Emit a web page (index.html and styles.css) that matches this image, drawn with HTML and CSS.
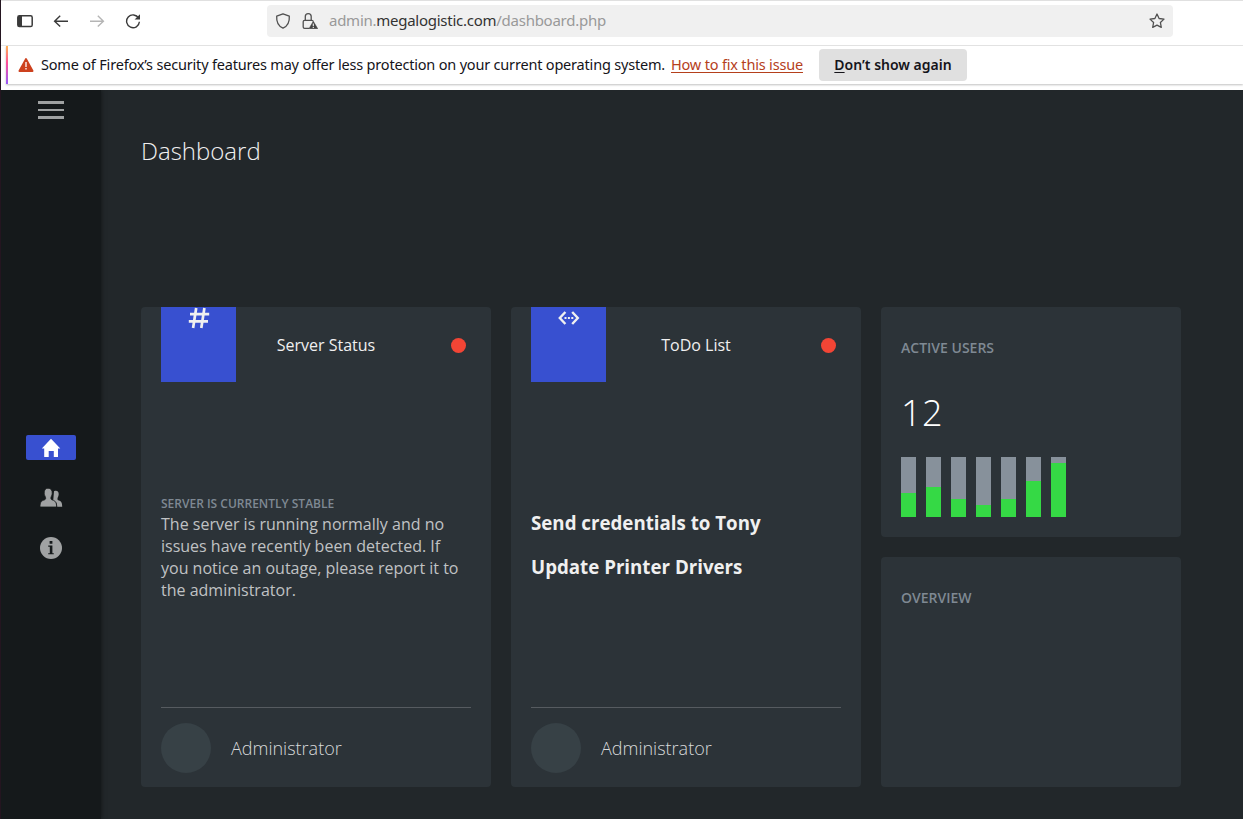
FILE: index.html
```
<!DOCTYPE html>
<html lang="en">
<head>
    <meta charset="UTF-8">
    <meta name="viewport" content="width=device-width, initial-scale=1.0">
    <title>Dashboard</title>
    <link rel="stylesheet" href="styles.css">
</head>
<body>
<div class="toolbar">
    <svg class="tool-icon" viewBox="0 0 16 16"><rect x="0.8" y="2.8" width="14.4" height="10.8" rx="1.6" fill="none" stroke="#3a3a3a" stroke-width="1.5"/><path d="M1 3h4v10H1z" fill="#3a3a3a"/></svg>
    <svg class="tool-icon" viewBox="0 0 16 16"><path d="M15 8.2H1.8M7.2 2.8L1.6 8.2l5.6 5.4" fill="none" stroke="#3a3a3a" stroke-width="1.4"/></svg>
    <svg class="tool-icon" viewBox="0 0 16 16"><path d="M1 8.2h13.2M8.8 2.8l5.6 5.4-5.6 5.4" fill="none" stroke="#b5b5b5" stroke-width="1.4"/></svg>
    <svg class="tool-icon" viewBox="0 0 16 16"><path d="M13.6 5.2A6.4 6.4 0 1 0 14.4 8.8" fill="none" stroke="#3a3a3a" stroke-width="1.4"/><path d="M15 1.2v5.3H9.6z" fill="#3a3a3a"/></svg>
    <div class="urlbar">
        <svg class="url-icon" viewBox="0 0 16 16"><path d="M8 .8l6.3 2.3c.4 5.4-1 9.7-6.3 12.1C2.7 12.8 1.3 8.5 1.7 3.1z" fill="none" stroke="#505050" stroke-width="1.3" stroke-linejoin="round"/></svg>
        <svg class="url-icon" viewBox="0 0 16 16"><path d="M7 15.3H2.6a1.4 1.4 0 0 1-1.4-1.4V8.7a1.4 1.4 0 0 1 1.4-1.4h7.300a1.4 1.4 0 0 1 1.3 1M3.3 7V3.6a2.900 2.900 0 0 1 5.900 0V7" fill="none" stroke="#505050" stroke-width="1.3"/><path d="M11.3 8.3L15.7 15.7H7z" fill="#444" stroke="#444" stroke-width=".6" stroke-linejoin="round"/><path d="M11.3 10.4v2.600M11.3 13.8v1.100" stroke="#f0f0f0" stroke-width="1.1"/></svg>
        <p class="url">admin.<b>megalogistic.com</b>/dashboard.php</p>
        <svg class="url-icon" viewBox="0 0 16 16"><path d="M8 1l2.100 4.500 4.900.6-3.600 3.400.9 4.900L8 12.100l-4.300 2.300.9-4.900L1 6.100l4.900-.6z" fill="none" stroke="#505050" stroke-width="1.3" stroke-linejoin="round"/></svg>
    </div>
</div>
<div class="notice">
    <svg class="warn" viewBox="0 0 16 16"><path d="M8 2L14.600 14H1.400z" fill="#cd411e" stroke="#cd411e" stroke-width="1.8" stroke-linejoin="round"/><path d="M8 5v5M8 11v1.600" stroke="#fff" stroke-width="1.3"/></svg>
    <p class="notice-text">Some of Firefox’s security features may offer less protection on your current operating system.</p>
    <a class="notice-link">How to fix this issue</a>
    <button class="notice-btn"><u>D</u>on’t show again</button>
</div>

<div class="app">
    <nav class="sidebar">
        <div class="burger"><span></span><span></span><span></span></div>
        <div class="menu">
            <a class="menu-item active"><svg width="20" height="20" viewBox="0 0 20 20"><path d="M10 .8L19.3 10.600H17V19h-4.200v-6H7.700v6H3.200v-8.400H.8z" fill="#fff"/></svg></a>
            <a class="menu-item"><svg width="24" height="20" viewBox="0 0 24 20"><path d="M15 3.200c2.800-1.300 4.900.2 4.700 3.100-.1 2.100-1 2.900-1.200 4.100-.1 1.300.2 1.700 1.400 2.100 2.200.8 3.300 1.500 3.300 6.300h-5c0-3.700-1.200-5-4-6z" fill="#a0a2a3"/><path d="M9 .2c2.900 0 4.400 2 4.200 5-.1 2.300-1.100 3.200-1.300 4.500-.1 1.400.3 1.900 1.700 2.400 2.600.9 4 1.800 4 6.900H1c0-5 1.300-6 3.900-6.900 1.400-.5 1.900-1 1.700-2.400-.2-1.300-1.300-2.200-1.400-4.500C5.100 2.200 6.300.2 9 .2z" fill="#a0a2a3" stroke="#15191b" stroke-width=".8"/></svg></a>
            <a class="menu-item"><svg width="22" height="22" viewBox="0 0 22 22"><circle cx="11" cy="11" r="11" fill="#a0a2a3"/><path d="M9.600 4h2.800v2.800H9.600zM8.200 8.600h4.200v7.600h1.400v1.100H8.200v-1.100h1.600V9.700H8.200z" fill="#15191b"/></svg></a>
        </div>
    </nav>
    <main class="content">
        <h1>Dashboard</h1>
        <div class="cards">
            <section class="card">
                <header class="card-head">
                    <div class="tile"><svg width="22" height="22" viewBox="0 0 22 22"><path d="M8.200 1L5.100 21M16.400 1l-3.100 20M2 7.200h19.200M.8 14.400h19.200" fill="none" stroke="#f0f0f0" stroke-width="2.700"/></svg></div>
                    <h2>Server Status</h2>
                    <span class="dot"></span>
                </header>
                <div class="card-body">
                    <h4>SERVER IS CURRENTLY STABLE</h4>
                    <p>The server is running normally and no issues have recently been detected. If you notice an outage, please report it to the administrator.</p>
                </div>
                <footer class="card-foot"><span class="avatar"></span>Administrator</footer>
            </section>
            <section class="card">
                <header class="card-head">
                    <div class="tile"><svg width="22" height="22" viewBox="0 0 22 22"><path d="M7.400 5L1.800 11l5.600 6M14.200 5l5.600 6-5.600 6" fill="none" stroke="#f0f0f0" stroke-width="2.400"/><path d="M6.500 10h2v2h-2zM9.900 10h2v2h-2zM13.300 10h2v2h-2z" fill="#f0f0f0"/></svg></div>
                    <h2>ToDo List</h2>
                    <span class="dot"></span>
                </header>
                <div class="card-body todo">
                    <h3>Send credentials to Tony</h3>
                    <h3>Update Printer Drivers</h3>
                </div>
                <footer class="card-foot"><span class="avatar"></span>Administrator</footer>
            </section>
            <div class="side">
                <section class="panel">
                    <h5>ACTIVE USERS</h5>
                    <p class="count">12</p>
                    <div class="bars">
                        <div class="bar"><span style="height: 40%"></span></div>
                        <div class="bar"><span style="height: 50%"></span></div>
                        <div class="bar"><span style="height: 30%"></span></div>
                        <div class="bar"><span style="height: 20%"></span></div>
                        <div class="bar"><span style="height: 30%"></span></div>
                        <div class="bar"><span style="height: 60%"></span></div>
                        <div class="bar"><span style="height: 90%"></span></div>
                    </div>
                </section>
                <section class="panel">
                    <h5>OVERVIEW</h5>
                </section>
            </div>
        </div>
    </main>
</div>
</body>
</html>
```
FILE: styles.css
```
* {
    margin: 0;
    padding: 0;
    box-sizing: border-box;
}
body {
    height: 819px;
    border-left: 1px solid #241520;
    background: #fff;
    font-family: "Open Sans", sans-serif;
    overflow: hidden;
}

/* browser bars */
.toolbar {
    display: flex;
    align-items: center;
    gap: 20px;
    height: 46px;
    padding: 0 70px 4px 16px;
    border-top: 1px solid #e0e0e0;
    border-bottom: 1px solid #e6e6e6;
    font-family: "Noto Sans", sans-serif;
}
.tool-icon {
    width: 16px;
    height: 16px;
}
.urlbar {
    display: flex;
    align-items: center;
    flex: 1;
    gap: 11px;
    height: 32px;
    margin-left: 106px;
    padding: 0 8px;
    border-radius: 4px;
    background: #f0f0f0;
}
.url-icon {
    width: 16px;
    height: 16px;
}
.url {
    flex: 1;
    padding-bottom: 2px;
    font-size: 15px;
    letter-spacing: -.26px;
    color: #999;
}
.url b {
    font-weight: 400;
    color: #333;
}
.notice {
    display: flex;
    align-items: center;
    height: 38px;
    margin-left: 5px;
    border-left: 2px solid;
    border-image: linear-gradient(#ffb84d, #ff4f9a 45%, #9059ff) 1;
    padding-left: 10px;
    box-shadow: 0 1px 2px rgba(0, 0, 0, .25);
    font-family: "Noto Sans", sans-serif;
    font-size: 14.5px;
    color: #15141a;
}
.warn {
    width: 16px;
    height: 16px;
    margin-right: 7px;
}
.notice-text {
    width: 630px;
    padding-bottom: 2px;
    letter-spacing: -.19px;
    white-space: nowrap;
}
.notice-link {
    width: 148px;
    padding-bottom: 2px;
    letter-spacing: -.18px;
    color: #b5401c;
    text-decoration: underline;
    text-underline-offset: 2px;
    white-space: nowrap;
}
.notice-btn {
    width: 148px;
    height: 32px;
    padding-bottom: 2px;
    border: 0;
    border-radius: 4px;
    background: #e0e0e0;
    color: #15141a;
    font: 600 14px "Noto Sans", sans-serif;
}
.notice-btn u {
    text-underline-offset: 2px;
}

/* page */
.app {
    display: flex;
    height: 729px;
    margin-top: 6px;
    background: #22272a;
    overflow: hidden;
}
.sidebar {
    width: 100px;
    padding-top: 11px;
    background: #15191b;
    box-shadow: 0 0 5px rgba(0, 0, 0, .5);
}
.burger {
    display: grid;
    gap: 5px;
    width: 26px;
    margin: 0 auto;
}
.burger span {
    height: 2.5px;
    background: #a0a2a3;
}
.menu {
    display: flex;
    flex-direction: column;
    align-items: center;
    gap: 25px;
    margin-top: 316.5px;
}
.menu-item {
    display: flex;
    align-items: center;
    justify-content: center;
    width: 50px;
    height: 25px;
    border-radius: 2px;
}
.active {
    background: #3850d0;
}
.content {
    padding: 44px 40px 0;
}
h1 {
    height: 173px;
    font-size: 24px;
    font-weight: 300;
    color: #f0f0f0;
}
.cards {
    display: grid;
    grid-template-columns: 350px 350px 300px;
    gap: 20px;
}
.card {
    display: flex;
    flex-direction: column;
    height: 480px;
    padding: 0 20px;
    border-radius: 4px;
    background: #2c3338;
}
.card-head {
    display: grid;
    grid-template-columns: 75px 180px 15px;
    align-items: center;
    height: 75px;
}
.tile {
    height: 75px;
    background: #3850d0;
    text-align: center;
}
h2 {
    font-size: 16px;
    font-weight: 400;
    color: #f0f0f0;
    text-align: center;
}
.dot {
    width: 15px;
    height: 15px;
    margin: 2px 0 0 35px;
    border-radius: 50%;
    background: #f24535;
}
.card-body {
    flex: 1;
    padding-top: 112px;
}
.card-body h4 {
    font-size: 12px;
    font-weight: 600;
    line-height: 19px;
    color: #7f8993;
}
.card-body p {
    font-size: 16px;
    line-height: 22px;
    color: #c0c2c4;
}
.todo {
    padding-top: 128px;
}
h3 {
    margin-bottom: 18px;
    font-size: 18.72px;
    line-height: 26px;
    color: #f0f0f0;
}
.card-foot {
    display: flex;
    align-items: center;
    gap: 20px;
    height: 80px;
    border-top: 1px solid #565b60;
    font-size: 18px;
    font-weight: 300;
    color: #d8dadb;
}
.avatar {
    width: 50px;
    height: 50px;
    border-radius: 50%;
    background: #374146;
}
.side {
    display: grid;
    gap: 20px;
}
.panel {
    height: 230px;
    padding: 31px 20px 0;
    border-radius: 4px;
    background: #2c3338;
}
h5 {
    font-size: 14px;
    font-weight: 600;
    line-height: 20px;
    color: #7f8993;
}
.count {
    height: 99px;
    padding-top: 28px;
    font-size: 36px;
    font-weight: 300;
    line-height: 54px;
    letter-spacing: .5px;
    color: #fff;
}
.bars {
    display: flex;
    gap: 10px;
    height: 60px;
}
.bar {
    display: flex;
    align-items: flex-end;
    width: 15px;
    background: #87919b;
}
.bar span {
    width: 15px;
    background: #35d945;
}
```
